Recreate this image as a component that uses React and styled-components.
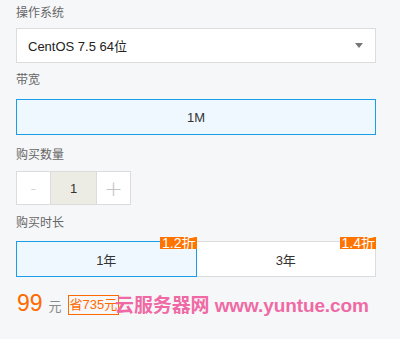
import React from "react";
import styled, { createGlobalStyle } from "styled-components";

const Global = createGlobalStyle`
  html, body { margin: 0; padding: 0; background: #f6f7f9; }
  body { font-family: "Liberation Sans", Arial, "Noto Sans CJK SC", sans-serif; }
`;

const Page = styled.div`
  width: 400px;
  height: 339px;
  box-sizing: border-box;
  padding: 5px 24px 0 16px;
  background: #f6f7f9;
  position: relative;
  overflow: hidden;
`;

const Label = styled.div`
  font-size: 12px;
  line-height: 16px;
  color: #666;
  margin-bottom: ${(p) => p.$mb || 7}px;
`;

const Section = styled.div`
  margin-bottom: ${(p) => p.$mb || 0}px;
`;

const Select = styled.div`
  height: 35px;
  box-sizing: border-box;
  border: 1px solid #dcdcdc;
  background: #fff;
  display: flex;
  align-items: center;
  justify-content: space-between;
  padding: 0 10px 0 11px;
  font-size: 13px;
  color: #222;
`;

const Caret = styled.span`
  width: 0;
  height: 0;
  border-left: 4px solid transparent;
  border-right: 4px solid transparent;
  border-top: 5px solid #777;
  margin-right: 2px;
`;

const Option = styled.div`
  position: relative;
  flex: 1;
  height: 36px;
  box-sizing: border-box;
  border: 1px solid ${(p) => (p.$active ? "#1a9ee8" : "#dcdcdc")};
  background: ${(p) => (p.$active ? "#f0f8ff" : "#fff")};
  display: flex;
  align-items: center;
  justify-content: center;
  font-size: 13px;
  color: #333;
  margin-left: ${(p) => (p.$joined ? "-1px" : "0")};
  z-index: ${(p) => (p.$active ? 1 : 0)};
`;

const Row = styled.div`
  display: flex;
`;

const Badge = styled.span`
  position: absolute;
  top: -5px;
  right: -1px;
  background: #ff7300;
  color: #fff;
  font-size: 14px;
  line-height: 12px;
  height: 12px;
  padding: 0 1px 0 2px;
  z-index: 2;
`;

const Stepper = styled.div`
  display: flex;
  width: 115px;
  height: 34px;
  box-sizing: border-box;
  border: 1px solid #dcdcdc;
  background: #fff;
`;

const StepBtn = styled.div`
  width: 33px;
  display: flex;
  align-items: center;
  justify-content: center;
  color: #c4c4c4;
  font-size: ${(p) => (p.$minus ? 16 : 22)}px;
  font-weight: 300;
  font-family: "DejaVu Sans", sans-serif;
`;

const StepValue = styled.div`
  flex: 1;
  display: flex;
  align-items: center;
  justify-content: center;
  background: #ecebe4;
  border-left: 1px solid #dcdcdc;
  border-right: 1px solid #dcdcdc;
  font-size: 13px;
  color: #333;
`;

const PriceRow = styled.div`
  display: flex;
  align-items: baseline;
  margin-top: 13px;
`;

const Price = styled.span`
  font-size: 23px;
  color: #ff6a00;
  margin-left: 1px;
`;

const Unit = styled.span`
  font-size: 13px;
  color: #888;
  margin-left: 6px;
`;

const Save = styled.span`
  margin-left: 6px;
  border: 1px solid #ff6a00;
  color: #ff6a00;
  font-size: 13px;
  line-height: 18px;
  padding: 0 1px;
  position: relative;
  top: -2px;
`;

const Watermark = styled.div`
  position: absolute;
  left: 115px;
  top: 290px;
  font-size: 19px;
  font-weight: bold;
  color: #ef5f9d;
  opacity: 0.92;
  white-space: nowrap;
  letter-spacing: -0.1px;
`;

export default function App() {
  return (
    <>
      <Global />
      <Page>
        <Section $mb={9}>
          <Label>操作系统</Label>
          <Select>
            <span>CentOS 7.5 64位</span>
            <Caret />
          </Select>
        </Section>
        <Section $mb={12}>
          <Label $mb={11}>带宽</Label>
          <Row>
            <Option $active>1M</Option>
          </Row>
        </Section>
        <Section $mb={10}>
          <Label $mb={8}>购买数量</Label>
          <Stepper>
            <StepBtn $minus>-</StepBtn>
            <StepValue>1</StepValue>
            <StepBtn>+</StepBtn>
          </Stepper>
        </Section>
        <Section>
          <Label $mb={10}>购买时长</Label>
          <Row>
            <Option $active>
              1年<Badge>1.2折</Badge>
            </Option>
            <Option $joined>
              3年<Badge>1.4折</Badge>
            </Option>
          </Row>
        </Section>
        <PriceRow>
          <Price>99</Price>
          <Unit>元</Unit>
          <Save>省735元</Save>
        </PriceRow>
        <Watermark>云服务器网 www.yuntue.com</Watermark>
      </Page>
    </>
  );
}
